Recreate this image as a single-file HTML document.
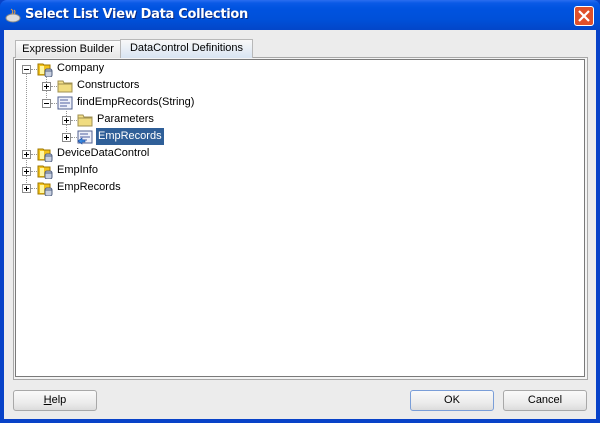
<!DOCTYPE html>
<html><head><style>
*{margin:0;padding:0;box-sizing:border-box}
body{width:600px;height:423px;overflow:hidden;font-family:"Liberation Sans",sans-serif;font-size:11px;background:#0842c8;position:relative}
.title{position:absolute;left:0;top:0;width:600px;height:30px;background:linear-gradient(#2a6df0 0,#0a5ae6 3px,#0053e0 8px,#0050d8 20px,#0346c8 30px);border-radius:7px 7px 0 0}
.title span{position:absolute;left:25px;top:7px;color:#fff;font-weight:bold;font-size:13px;font-family:"DejaVu Sans","Liberation Sans",sans-serif;text-shadow:1px 1px 0 #0a2a80;letter-spacing:-.3px}
.close{position:absolute;left:574px;top:6px;width:20px;height:20px;background:#e0502a;border:1px solid #fff;border-radius:3px}
.client{position:absolute;left:4px;top:30px;width:592px;height:389px;background:#ececec}
.abs{position:absolute}
.tab{position:absolute;top:40px;height:18px;border:1px solid #b8b8b8;border-bottom:none;padding-top:2px;text-align:center;color:#000}
.panel{position:absolute;left:13px;top:57px;width:575px;height:323px;border:1px solid #a8a8a8;background:#f4f4f4}
.tree{position:absolute;left:15px;top:59px;width:570px;height:318px;border:1px solid #7a7a7a;background:#fff}
.row{position:absolute;height:17px;line-height:17px;white-space:nowrap;color:#000}
.exp{position:absolute;width:9px;height:9px;border:1px solid #8a8a8a;background:#fff}
.exp:before{content:"";position:absolute;left:1px;top:3px;width:5px;height:1px;background:#000}
.exp.p:after{content:"";position:absolute;left:3px;top:1px;width:1px;height:5px;background:#000}
.dh{position:absolute;height:1px;border-top:1px dotted #999}
.dv{position:absolute;width:1px;border-left:1px dotted #999}
.btn{position:absolute;top:390px;width:84px;height:21px;border:1px solid #a8a8a8;border-radius:3px;background:linear-gradient(#fafafa,#ececec 60%,#dcdcdc);text-align:center;line-height:19px}
</style></head><body>
<div class="title">
<svg class="abs" style="left:5px;top:7px" width="16" height="16"><ellipse cx="8" cy="11" rx="7" ry="4" fill="#ddd" stroke="#888"/><path d="M6 2 Q9 4 7 7 M9 3 Q11 5 9 7" stroke="#e8a040" fill="none"/></svg>
<span>Select List View Data Collection</span>
<div class="close"><svg width="18" height="18"><path d="M4 4L14 14M14 4L4 14" stroke="#fff" stroke-width="2.2"/></svg></div>
</div>
<div class="client"></div>
<div class="panel"></div>
<div class="tab" style="left:15px;width:106px;background:linear-gradient(#fcfcfc,#e6e6e6)">Expression Builder</div>
<div class="tab" style="left:120px;width:133px;top:39px;height:19px;background:linear-gradient(#f8f8f8,#d8e4f2)">DataControl Definitions</div>
<div class="tree"></div>

<div class="dv" style="left:26px;top:73px;height:116px"></div>
<div class="dv" style="left:46px;top:77px;height:27px"></div>
<div class="dv" style="left:66px;top:111px;height:27px"></div>

<svg width="0" height="0" style="position:absolute"><defs>
<g id="dc"><path d="M1 3h5l1 1h6v10H1z" fill="#f2c21a" stroke="#a07800"/><rect x="3" y="5" width="4" height="8" fill="#fff6a0"/><rect x="8" y="8" width="7" height="8" rx="2" fill="#c8d0e0" stroke="#506080"/><line x1="8" y1="10" x2="15" y2="10" stroke="#506080"/></g>
<g id="fo"><path d="M1 3h5l1 2h8v9H1z" fill="#f4e08a" stroke="#a09050"/><rect x="1" y="6" width="14" height="8" fill="#f0dc80" stroke="#a09050"/></g>
<g id="me"><rect x="1" y="2" width="14" height="12" fill="#eef0fa" stroke="#506090"/><path d="M3 5h8M3 8h10M3 11h7" stroke="#5060a0"/></g>
</defs></svg>

<div class="exp" style="left:22px;top:65px"></div><div class="dh" style="left:31px;top:69px;width:6px"></div>
<svg class="abs" style="left:37px;top:61px" width="16" height="16"><use href="#dc"/></svg>
<div class="row" style="left:57px;top:60px">Company</div>

<div class="exp p" style="left:42px;top:82px"></div><div class="dh" style="left:51px;top:86px;width:6px"></div>
<svg class="abs" style="left:57px;top:78px" width="16" height="16"><use href="#fo"/></svg>
<div class="row" style="left:77px;top:77px">Constructors</div>

<div class="exp" style="left:42px;top:99px"></div><div class="dh" style="left:51px;top:103px;width:6px"></div>
<svg class="abs" style="left:57px;top:95px" width="16" height="16"><use href="#me"/></svg>
<div class="row" style="left:77px;top:94px">findEmpRecords(String)</div>

<div class="exp p" style="left:62px;top:116px"></div><div class="dh" style="left:71px;top:120px;width:6px"></div>
<svg class="abs" style="left:77px;top:112px" width="16" height="16"><use href="#fo"/></svg>
<div class="row" style="left:97px;top:111px">Parameters</div>

<div class="exp p" style="left:62px;top:133px"></div><div class="dh" style="left:71px;top:137px;width:6px"></div>
<svg class="abs" style="left:77px;top:129px" width="16" height="16"><use href="#me"/><path d="M1 12l4-3v2h3v2H5v2z" fill="#3a8ae0" stroke="#1a4aa0" stroke-width=".6"/></svg>
<div class="row" style="left:96px;top:128px;background:#2f5f98;color:#fff;padding:0 2px;height:17px">EmpRecords</div>

<div class="exp p" style="left:22px;top:150px"></div><div class="dh" style="left:31px;top:154px;width:6px"></div>
<svg class="abs" style="left:37px;top:146px" width="16" height="16"><use href="#dc"/></svg>
<div class="row" style="left:57px;top:145px">DeviceDataControl</div>

<div class="exp p" style="left:22px;top:167px"></div><div class="dh" style="left:31px;top:171px;width:6px"></div>
<svg class="abs" style="left:37px;top:163px" width="16" height="16"><use href="#dc"/></svg>
<div class="row" style="left:57px;top:162px">EmpInfo</div>

<div class="exp p" style="left:22px;top:184px"></div><div class="dh" style="left:31px;top:188px;width:6px"></div>
<svg class="abs" style="left:37px;top:180px" width="16" height="16"><use href="#dc"/></svg>
<div class="row" style="left:57px;top:179px">EmpRecords</div>

<div class="btn" style="left:13px"><u>H</u>elp</div>
<div class="btn" style="left:410px;border-color:#7a9ed8">OK</div>
<div class="btn" style="left:503px">Cancel</div>
</body></html>
